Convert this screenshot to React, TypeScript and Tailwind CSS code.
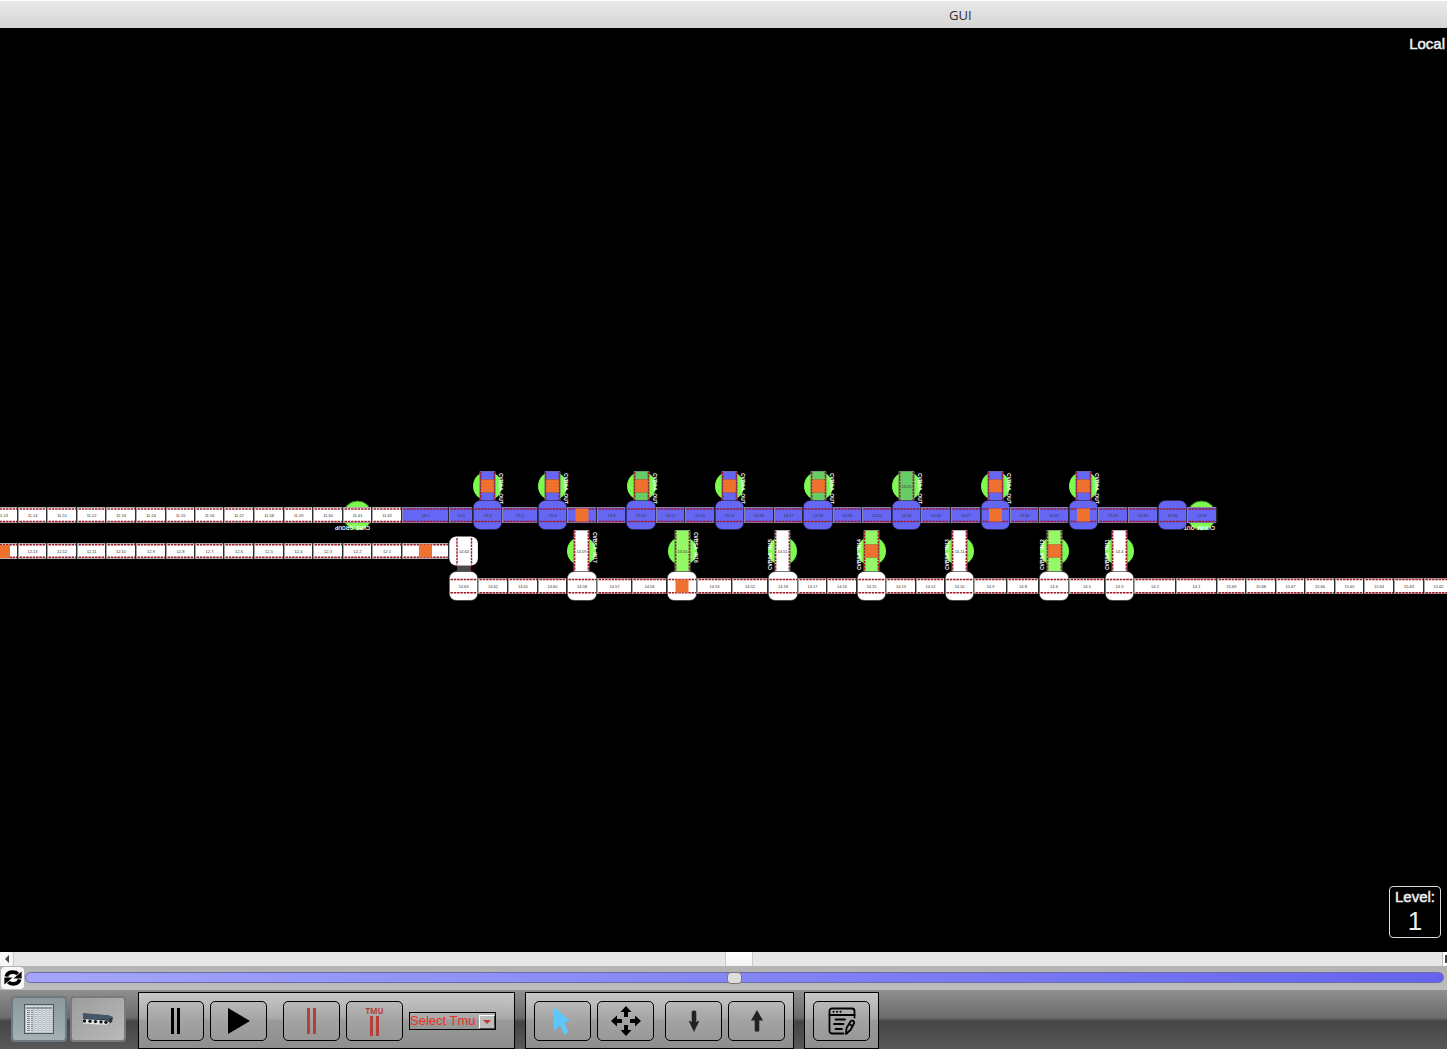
import { useState, type ReactNode } from "react";

type Fill = "white" | "blue" | "green" | "lime" | "dark";

interface Segment {
  end: number;
  label?: string;
  // raised transfer block instead of a plain belt
  block?: boolean;
  loaded?: boolean;
}

interface Spur {
  x: number;
  fill: Fill;
  label?: string;
  loaded?: boolean;
  name: string;
  flipped?: boolean;
}

const COLORS: Record<Fill, string> = {
  white: "#ffffff",
  blue: "#6666f5",
  green: "#66cc66",
  lime: "#93f966",
  dark: "#4a4a4a",
};

const RAIL = "#9c1b28";
const LOAD = "#ee7130";
const LIME = "#7dfb4c";

const WHITE_TOP: Segment[] = [
  { end: 18, label: "11.13" },
  { end: 47, label: "11.14" },
  { end: 77, label: "11.51" },
  { end: 106, label: "11.52" },
  { end: 136, label: "11.53" },
  { end: 166, label: "11.54" },
  { end: 195, label: "11.55" },
  { end: 224, label: "11.56" },
  { end: 254, label: "11.57" },
  { end: 284, label: "11.58" },
  { end: 313, label: "11.59" },
  { end: 343, label: "11.60" },
  { end: 372, label: "11.61" },
  { end: 402, label: "11.62" },
];

const BLUE_TOP: Segment[] = [
  { end: 449, label: "13.1" },
  { end: 473, label: "13.2" },
  { end: 502, label: "13.3", block: true },
  { end: 538, label: "13.5" },
  { end: 567, label: "13.6", block: true },
  { end: 597, loaded: true },
  { end: 626, label: "13.8" },
  { end: 656, label: "13.10", block: true },
  { end: 685, label: "13.12" },
  { end: 715, label: "13.13" },
  { end: 744, label: "13.15", block: true },
  { end: 774, label: "13.16" },
  { end: 803, label: "13.17" },
  { end: 833, label: "13.18", block: true },
  { end: 862, label: "13.20" },
  { end: 892, label: "13.22" },
  { end: 921, label: "13.24", block: true },
  { end: 951, label: "13.26" },
  { end: 981, label: "13.27" },
  { end: 1010, block: true, loaded: true },
  { end: 1039, label: "13.30" },
  { end: 1069, label: "13.31" },
  { end: 1098, block: true, loaded: true },
  { end: 1128, label: "13.33" },
  { end: 1158, label: "13.35" },
  { end: 1187, label: "13.36", block: true },
  { end: 1217, label: "13.37" },
];

const MIDDLE: Segment[] = [
  { end: 18 },
  { end: 47, label: "12.13" },
  { end: 77, label: "12.12" },
  { end: 106, label: "12.11" },
  { end: 136, label: "12.10" },
  { end: 166, label: "12.9" },
  { end: 195, label: "12.8" },
  { end: 224, label: "12.7" },
  { end: 254, label: "12.6" },
  { end: 284, label: "12.5" },
  { end: 313, label: "12.4" },
  { end: 343, label: "12.3" },
  { end: 372, label: "12.2" },
  { end: 402, label: "12.1" },
  { end: 449, loaded: true },
];

const BOTTOM: Segment[] = [
  { end: 478, label: "14.63", block: true },
  { end: 508, label: "14.62" },
  { end: 538, label: "14.61" },
  { end: 567, label: "14.60" },
  { end: 597, label: "14.58", block: true },
  { end: 632, label: "14.57" },
  { end: 667, label: "14.56" },
  { end: 697, block: true, loaded: true },
  { end: 732, label: "14.53" },
  { end: 768, label: "14.52" },
  { end: 798, label: "14.18", block: true },
  { end: 827, label: "14.17" },
  { end: 857, label: "14.16" },
  { end: 886, label: "14.15", block: true },
  { end: 916, label: "14.13" },
  { end: 945, label: "14.12" },
  { end: 974, label: "14.10", block: true },
  { end: 1007, label: "14.9" },
  { end: 1039, label: "14.8" },
  { end: 1069, label: "14.6", block: true },
  { end: 1105, label: "14.5" },
  { end: 1134, label: "14.3", block: true },
  { end: 1176, label: "14.2" },
  { end: 1217, label: "14.1" },
  { end: 1246, label: "15.69" },
  { end: 1276, label: "15.68" },
  { end: 1305, label: "15.67" },
  { end: 1335, label: "15.66" },
  { end: 1364, label: "15.65" },
  { end: 1394, label: "15.64" },
  { end: 1424, label: "15.63" },
  { end: 1453, label: "15.62" },
];

const OUT_SPURS: Spur[] = [
  { x: 487, fill: "blue", loaded: true, name: "CVBSA_OUT" },
  { x: 552, fill: "blue", loaded: true, name: "CVBSA_OUT" },
  { x: 641, fill: "green", loaded: true, name: "CVBSA_OUT" },
  { x: 729, fill: "blue", loaded: true, name: "CVBSA_OUT" },
  { x: 818, fill: "green", loaded: true, name: "CVBSA_OUT" },
  { x: 906, fill: "green", label: "13.25", name: "CVBSA_OUT" },
  { x: 995, fill: "blue", loaded: true, name: "CVBSA_OUT" },
  { x: 1083, fill: "blue", loaded: true, name: "CVBSA_OUT" },
];

const IN_SPURS: Spur[] = [
  { x: 581, fill: "white", label: "14.59", name: "CVBSA_IN17" },
  { x: 682, fill: "lime", label: "14.55", name: "CVBSA_IN16" },
  { x: 782, fill: "white", label: "14.51", name: "CVBSA_IN15", flipped: true },
  { x: 871, fill: "lime", loaded: true, name: "CVBSA_IN14", flipped: true },
  { x: 959, fill: "white", label: "14.11", name: "CVBSA_IN13", flipped: true },
  { x: 1054, fill: "lime", loaded: true, name: "CVBSA_IN12", flipped: true },
  { x: 1119, fill: "white", label: "14.4", name: "CVBSA_IN11", flipped: true },
];

function Rail({ x1, y1, x2, y2 }: { x1: number; y1: number; x2: number; y2: number }) {
  return <line x1={x1} y1={y1} x2={x2} y2={y2} stroke={RAIL} strokeWidth={1.4} strokeDasharray="2.5 0.8" />;
}

function CellLabel({ x, y, children }: { x: number; y: number; children: ReactNode }) {
  return (
    <text x={x} y={y} textAnchor="middle" className="fill-[#333333] text-[4px]">
      {children}
    </text>
  );
}

function Belt({
  start,
  y,
  height,
  fill,
  segments,
  railTop,
  railBottom,
}: {
  start: number;
  y: number;
  height: number;
  fill: Fill;
  segments: Segment[];
  railTop: number;
  railBottom: number;
}) {
  const cells = segments.map((segment, i) => ({
    ...segment,
    start: i === 0 ? start : segments[i - 1].end,
  }));
  const mid = y + height / 2;

  return (
    <g>
      {cells.map((cell) => {
        const width = cell.end - cell.start;
        const cx = cell.start + width / 2;
        return (
          <g key={cell.end}>
            {cell.block ? (
              <rect
                x={cell.start + 0.3}
                y={mid - 14.5}
                width={width - 0.6}
                height={29}
                rx={7}
                fill={COLORS[fill]}
                stroke="#222233"
                strokeWidth={0.6}
              />
            ) : (
              <>
                <rect x={cell.start} y={y} width={width} height={height} fill="#8f8f8f" />
                <rect x={cell.start + 0.8} y={y + 0.7} width={width - 1.6} height={height - 1.4} fill={COLORS[fill]} />
                <rect x={cell.end - 0.8} y={y} width={1.6} height={height} fill="#101018" />
              </>
            )}
            <Rail x1={cell.start + 1.5} y1={railTop} x2={cell.end - 1} y2={railTop} />
            <Rail x1={cell.start + 1.5} y1={railBottom} x2={cell.end - 1} y2={railBottom} />
            {cell.loaded && <rect x={cx - 6.5} y={mid - 6.5} width={13} height={13} fill={LOAD} />}
            {cell.label && (
              <CellLabel x={cx} y={mid + 2}>
                {cell.label}
              </CellLabel>
            )}
          </g>
        );
      })}
    </g>
  );
}

function SpurBelt({ spur, y, height }: { spur: Spur; y: number; height: number }) {
  const mid = y + height / 2;
  const cx = spur.x + 0.5;
  return (
    <g>
      <circle cx={cx} cy={mid} r={14.5} fill={LIME} />
      {spur.flipped ? (
        <text transform={`translate(${cx - 11} ${mid + 19}) rotate(-90)`} className="fill-white text-[5px] font-bold">
          {spur.name}
        </text>
      ) : (
        <text transform={`translate(${cx + 11} ${y + 2}) rotate(90)`} className="fill-white text-[5px] font-bold">
          {spur.name}
        </text>
      )}
      <rect x={cx - 8} y={y} width={16} height={height} rx={1} fill="#6b6b6b" />
      <rect x={cx - 7.5} y={y + 0.5} width={15} height={height - 0.5} rx={1} fill={COLORS[spur.fill]} />
      <Rail x1={cx - 6.8} y1={y + 1} x2={cx - 6.8} y2={y + height} />
      <Rail x1={cx + 6.8} y1={y + 1} x2={cx + 6.8} y2={y + height} />
      {spur.loaded && (
        <rect x={cx - 6.5} y={mid - 6.5} width={13} height={13} fill={LOAD} stroke="#a04a20" strokeWidth={0.4} />
      )}
      {spur.label && (
        <CellLabel x={cx} y={mid + 2}>
          {spur.label}
        </CellLabel>
      )}
    </g>
  );
}

function PlantMap() {
  return (
    <svg className="block h-full w-full font-['Liberation_Sans',sans-serif]" aria-label="Conveyor map">
      <g transform="translate(0 -28)">
        <circle cx={357.5} cy={515.5} r={14.5} fill={LIME} stroke="#2c7a1c" strokeWidth={1} />
        <circle cx={1201.5} cy={515.5} r={14.5} fill={LIME} stroke="#2c7a1c" strokeWidth={1} />
        <text transform="translate(370 526) rotate(180)" className="fill-white text-[5px] font-bold">
          CVBS_GROUP
        </text>
        <text transform="translate(1215 526) rotate(180)" className="fill-white text-[5px] font-bold">
          CVBTM_OUT
        </text>

        {OUT_SPURS.map((spur) => (
          <SpurBelt key={spur.x} spur={spur} y={471} height={30} />
        ))}
        {IN_SPURS.map((spur) => (
          <SpurBelt key={spur.x} spur={spur} y={530} height={42} />
        ))}

        <Belt start={-12} y={507} height={16} fill="white" segments={WHITE_TOP} railTop={509} railBottom={521.5} />
        <Belt start={402} y={507} height={16} fill="blue" segments={BLUE_TOP} railTop={509} railBottom={521.5} />
        <Belt start={-12} y={543} height={16} fill="white" segments={MIDDLE} railTop={544.7} railBottom={557.3} />
        <rect x={-3} y={545} width={13} height={13} fill={LOAD} />

        {/* lift between the middle and the bottom line */}
        <rect x={457} y={565} width={14} height={8} fill={COLORS.dark} />
        <Rail x1={457.5} y1={566} x2={457.5} y2={572} />
        <Rail x1={470.5} y1={566} x2={470.5} y2={572} />
        <rect x={449.3} y={536.5} width={28.6} height={29} rx={7} fill="#ffffff" />
        <Rail x1={457} y1={538} x2={457} y2={565} />
        <Rail x1={471.5} y1={538} x2={471.5} y2={565} />
        <CellLabel x={464} y={553}>
          14.64
        </CellLabel>

        <Belt start={449} y={578} height={16} fill="white" segments={BOTTOM} railTop={579.5} railBottom={592.7} />
      </g>
    </svg>
  );
}

function ToolButton({ label, onClick, children }: { label: string; onClick?: () => void; children: ReactNode }) {
  return (
    <button
      aria-label={label}
      onClick={onClick}
      className="flex h-10 w-[57px] shrink-0 items-center justify-center rounded-[5px] border border-black bg-linear-to-b from-[#b8b8b8] via-[#a3a3a3] to-[#989898]"
    >
      {children}
    </button>
  );
}

function Panel({ children }: { children: ReactNode }) {
  return (
    <div className="flex shrink-0 items-start border border-black bg-[linear-gradient(#c9c9c9,#a9a9a9_46%,#9a9a9a_50%,#8e8e8e)] p-2">
      {children}
    </div>
  );
}

function PauseIcon({ className }: { className: string }) {
  return (
    <svg viewBox="0 0 9 26" className={className} fill="currentColor" preserveAspectRatio="none">
      <rect x="0" y="0" width="3" height="26" />
      <rect x="6" y="0" width="3" height="26" />
    </svg>
  );
}

function RefreshIcon() {
  return (
    <svg viewBox="0 0 18 18" className="h-[18px] w-[18px]">
      <path d="M2.4 7.6C3 4.8 5.800 3.200 9 3.200c2 0 3.600.6 4.800 1.800" fill="none" stroke="#000" strokeWidth="3.800" />
      <path d="M17.600 2.400v7h-8z" />
      <path d="M15.600 10.400c-.6 2.800-3.400 4.400-6.600 4.400-2 0-3.600-.6-4.800-1.800" fill="none" stroke="#000" strokeWidth="3.800" />
      <path d="M.4 15.600v-7h8z" />
    </svg>
  );
}

function SheetIcon() {
  const rows = Array.from({ length: 11 }, (_, i) => i);
  return (
    <svg viewBox="0 0 30 30" className="h-[30px] w-[30px]">
      <rect x="0.5" y="0.5" width="29" height="29" fill="#b9c3c7" stroke="#4c585e" />
      <rect x="2" y="2" width="26" height="26" fill="#dde3e5" />
      <rect x="2" y="3" width="26" height="2" fill="#8c989e" />
      {rows.map((row) => (
        <g key={row}>
          <line x1="3" x2="9" y1={6.5 + row * 2} y2={6.5 + row * 2} stroke="#7b888e" strokeDasharray="3 1" />
          <line x1="11" x2="28" y1={6.5 + row * 2} y2={6.5 + row * 2} stroke="#b2bcc1" strokeDasharray="2 2" />
        </g>
      ))}
      {[10, 14, 18, 22, 26].map((x) => (
        <line key={x} x1={x} x2={x} y1="2" y2="28" stroke="#8e9ba1" strokeWidth="0.6" />
      ))}
    </svg>
  );
}

function ConveyorIcon() {
  return (
    <svg viewBox="0 0 32 14" className="h-[14px] w-8">
      <path d="M1 1.500L27 3.500 31 5.500 30 10 25 13 1 9.500z" fill="#2e3740" />
      <path d="M1 1L26 3.200 31 5 27 7.500 1 6.500z" fill="#46576a" />
      <path d="M1 7L25 8.500 28 11 25 13 1 11.500z" fill="#e8e8e8" />
      {[2.5, 8, 13.5, 19, 24].map((x, i) => (
        <circle key={x} cx={x} cy={9 + i * 0.3} r="1.700" fill="#15181b" />
      ))}
    </svg>
  );
}

function MoveIcon() {
  return (
    <svg viewBox="0 0 30 30" className="h-[30px] w-[30px]">
      {[0, 90, 180, 270].map((angle) => (
        <path key={angle} d="M15 0l5.500 6H17v5h-4V6H9.500z" transform={`rotate(${angle} 15 15)`} />
      ))}
    </svg>
  );
}

function NotesIcon() {
  return (
    <svg viewBox="0 0 28 28" className="h-7 w-7" fill="none" stroke="#000" strokeWidth="1.800" strokeLinecap="round" strokeLinejoin="round">
      <path d="M15.500 26.500H4A2.500 2.500 0 0 1 1.500 24V4A2.500 2.500 0 0 1 4 1.500h20A2.500 2.500 0 0 1 26.500 4v6.500" />
      <path d="M1.500 8h25" />
      <path d="M5.500 4.800h.1M9 4.800h.1M12.500 4.800h.1" strokeWidth="2" />
      <path d="M7.500 12.500H17M6 17h9.500M7.500 22H14" />
      <path d="M18 27l.5-6 4-6.500q1-1.500 2.600-.6t.9 2.600L22.500 23zM21 17l3.500 2" />
    </svg>
  );
}

export default function App() {
  const [zoom, setZoom] = useState(50);
  const [tmu, setTmu] = useState("");

  return (
    <div className="flex h-screen flex-col overflow-hidden bg-black font-['Liberation_Sans',sans-serif]">
      <header className="flex h-7 shrink-0 items-center border-t border-white bg-linear-to-b from-[#e9e9e9] to-[#d5d5d5] pl-[949px]">
        <h1 className="font-['Open_Sans',sans-serif] text-[13px] leading-4 font-medium text-[#2f2f2f]">GUI</h1>
      </header>

      <main className="relative min-h-0 flex-1 text-[15px] text-[#eeeeee]">
        <PlantMap />
        <span className="absolute top-2 right-0.5 leading-4 [-webkit-text-stroke:0.5px_#eeeeee]">Local</span>
        <div className="absolute right-1.5 bottom-3.5 flex h-[52px] w-[52px] flex-col items-center rounded border border-[#dddddd]">
          <span className="pt-0.5 leading-4 [-webkit-text-stroke:0.5px_#eeeeee]">Level:</span>
          <span className="text-[26px] leading-8">1</span>
        </div>
      </main>

      <div className="flex h-3.5 shrink-0 bg-[#e7e7e7]">
        <button aria-label="Scroll left" className="flex w-3.5 items-center justify-center border-r border-[#cccccc] bg-[#f6f6f6]">
          <svg viewBox="0 0 4 8" className="h-2 w-1">
            <path d="M4 0v8L0 4z" fill="#444" />
          </svg>
        </button>
        <div className="flex-1">
          <div className="ml-[49.8%] h-full w-7 border-x border-[#cccccc] bg-linear-to-b from-white to-[#f3f3f3]" />
        </div>
        <button aria-label="Scroll right" className="flex w-[5px] items-center justify-end overflow-hidden border-l border-[#bbbbbb] bg-white">
          <svg viewBox="0 0 2 8" className="h-2 w-0.5">
            <path d="M0 0h2v8H0z" fill="#444" />
          </svg>
        </button>
      </div>

      <div className="flex h-6 shrink-0 items-start bg-linear-to-b from-[#b3b3b3] to-[#bdbdbd]">
        <button
          aria-label="Reset zoom"
          onClick={() => setZoom(50)}
          className="mt-px ml-px flex h-[22px] w-[23px] shrink-0 items-center justify-center rounded-sm bg-[#f8f8f8]"
        >
          <RefreshIcon />
        </button>
        <input
          type="range"
          aria-label="Zoom"
          value={zoom}
          onChange={(e) => setZoom(Number(e.target.value))}
          className="mt-1.5 mr-[3px] ml-px h-[11px] min-w-0 flex-1 appearance-none rounded-full border border-[#6a6aa8] bg-linear-to-r from-[#a5a5f8] to-[#6464ee] [&::-webkit-slider-thumb]:h-3 [&::-webkit-slider-thumb]:w-[15px] [&::-webkit-slider-thumb]:appearance-none [&::-webkit-slider-thumb]:rounded [&::-webkit-slider-thumb]:border [&::-webkit-slider-thumb]:border-[#777777] [&::-webkit-slider-thumb]:bg-[#dedede]"
        />
      </div>

      <footer className="flex h-[59px] shrink-0 bg-[linear-gradient(#8f8f8f,#6b6b6b_47%,#454545_53%,#585858)] pt-0.5 pl-[11px]">
        <div className="flex shrink-0 gap-[3px] pt-1 pr-3">
          <button
            aria-label="Table view"
            className="flex h-[46px] w-14 items-center justify-center rounded-sm border-2 border-[#6f797e] bg-linear-to-b from-[#8c999f] to-[#a3b0b5]"
          >
            <SheetIcon />
          </button>
          <button
            aria-label="Conveyor view"
            className="flex h-[46px] w-14 items-center justify-center rounded-sm border-2 border-[#7a7a7a] bg-linear-to-br from-[#9d9d9d] to-[#b9b9b9]"
          >
            <ConveyorIcon />
          </button>
        </div>

        <div className="flex gap-2.5">
          <Panel>
            <div className="flex gap-1.5 pr-4">
              <ToolButton label="Pause">
                <PauseIcon className="h-[26px] w-[9px]" />
              </ToolButton>
              <ToolButton label="Play">
                <svg viewBox="0 0 22 26" className="h-[26px] w-[22px]">
                  <path d="M0 0l22 13L0 26z" />
                </svg>
              </ToolButton>
            </div>
            <div className="flex gap-1.5">
              <ToolButton label="Pause line">
                <PauseIcon className="h-[26px] w-[9px] text-[#b5403c]" />
              </ToolButton>
              <ToolButton label="Pause TMU">
                <span className="flex flex-col items-center gap-px text-[#b5403c]">
                  <span className="font-['Open_Sans',sans-serif] text-[8px] leading-2 font-bold">TMU</span>
                  <PauseIcon className="h-5 w-[9px]" />
                </span>
              </ToolButton>
            </div>
            <div className="relative mt-[11px] mr-2.5 ml-1.5">
              <select
                aria-label="Select Tmu"
                value={tmu}
                onChange={(e) => setTmu(e.target.value)}
                className="block h-[18px] w-[87px] appearance-none border border-black bg-transparent text-[13px] leading-4 text-[#ee3124]"
              >
                <option value="">Select Tmu</option>
                <option value="1">1</option>
                <option value="2">2</option>
              </select>
              <span className="pointer-events-none absolute right-px bottom-px flex h-[14px] w-4 items-center justify-center border border-t-white border-l-white border-r-[#444444] border-b-[#444444] bg-[#bdbdbd]">
                <svg viewBox="0 0 8 4" className="h-1 w-2">
                  <path d="M0 0h8L4 4z" fill="#c03a34" />
                </svg>
              </span>
            </div>
          </Panel>

          <Panel>
            <div className="flex gap-1.5 pr-[11px]">
              <ToolButton label="Select">
                <svg viewBox="0 0 30 30" className="h-[30px] w-[30px]">
                  <path d="M6 1l16 14-6 1.500 4.500 9.500-4 2.500-4.500-9.500L6 25z" fill="#5cc8fb" />
                </svg>
              </ToolButton>
              <ToolButton label="Move">
                <MoveIcon />
              </ToolButton>
            </div>
            <div className="flex gap-1.5">
              <ToolButton label="Level down">
                <svg viewBox="0 0 12 22" className="h-[22px] w-3">
                  <path d="M3.700 1.500q2.300-2 4.600 0V12l3.200-1.500L6 22 .5 10.500 3.700 12z" fill="#222" />
                </svg>
              </ToolButton>
              <ToolButton label="Level up">
                <svg viewBox="0 0 12 22" className="h-[22px] w-3">
                  <path d="M3.700 21q2.300 1.500 4.600 0V10.500H12L6 0 0 10.500h3.700z" fill="#222" />
                </svg>
              </ToolButton>
            </div>
          </Panel>

          <Panel>
            <ToolButton label="Notes">
              <NotesIcon />
            </ToolButton>
          </Panel>
        </div>
      </footer>
    </div>
  );
}
